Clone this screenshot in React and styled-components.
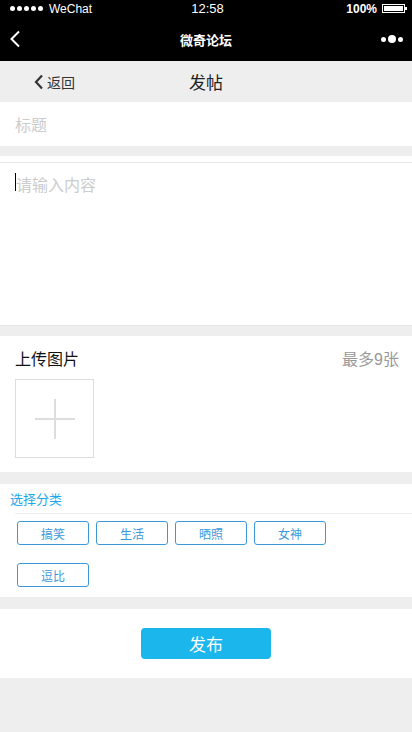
import React from 'react';
import styled, { createGlobalStyle } from 'styled-components';

const GlobalStyle = createGlobalStyle`
  html, body {
    margin: 0;
    padding: 0;
    background: #eeeeee;
    font-family: "Liberation Sans", "Noto Sans CJK SC", sans-serif;
  }
  * { box-sizing: border-box; }
`;

const Page = styled.div`
  width: 412px;
  min-height: 732px;
  background: #eeeeee;
`;

const StatusBar = styled.div`
  height: 17px;
  background: #000;
  color: #fff;
  display: grid;
  grid-template-columns: 1fr auto 1fr;
  align-items: center;
  padding: 0 7px 0 10px;
  font-size: 12px;
`;

const Signal = styled.div`
  display: flex;
  align-items: center;
  gap: 2px;
  span.dot {
    width: 5px;
    height: 5px;
    border-radius: 50%;
    background: #fff;
  }
  span.name {
    margin-left: 4px;
  }
`;

const Clock = styled.div`
  font-size: 13px;
`;

const Battery = styled.div`
  justify-self: end;
  display: flex;
  align-items: center;
  gap: 5px;
  font-weight: bold;
  font-size: 12px;
`;

const BatteryBody = styled.div`
  position: relative;
  width: 23px;
  height: 9px;
  border: 1px solid #fff;
  padding: 1px;
  &::before {
    content: '';
    display: block;
    width: 100%;
    height: 100%;
    background: #fff;
  }
  &::after {
    content: '';
    position: absolute;
    right: -3px;
    top: 2px;
    width: 2px;
    height: 3px;
    background: #fff;
  }
`;

const NavBar = styled.div`
  height: 44px;
  background: #000;
  color: #fff;
  display: flex;
  align-items: center;
  justify-content: space-between;
  padding: 0 9px 0 9px;
  position: relative;
`;

const NavTitle = styled.div`
  position: absolute;
  left: 0;
  right: 0;
  text-align: center;
  font-size: 13px;
  font-weight: bold;
  pointer-events: none;
`;

const MoreDots = styled.div`
  display: flex;
  align-items: center;
  gap: 2px;
`;

const Dot = styled.span`
  display: block;
  width: ${p => p.$size}px;
  height: ${p => p.$size}px;
  border-radius: 50%;
  background: #fff;
`;

const Header = styled.div`
  height: 41px;
  display: grid;
  grid-template-columns: 1fr auto 1fr;
  align-items: center;
  padding: 0 0 0 34px;
  color: #333;
`;

const BackLink = styled.div`
  display: flex;
  align-items: center;
  gap: 3px;
  font-size: 14px;
  color: #333;
`;

const HeaderTitle = styled.div`
  font-size: 17px;
  color: #222;
  margin-left: -34px;
`;

const Section = styled.div`
  background: #fff;
  margin-bottom: ${p => p.$gap || 10}px;
  padding-bottom: ${p => p.$pad || 0}px;
`;

const TitleInput = styled.div`
  height: 44px;
  display: flex;
  align-items: center;
  padding-left: 15px;
  font-size: 16px;
  color: #cccccc;
`;

const ContentBox = styled.div`
  height: 170px;
  padding-top: 6px;
  border-bottom: 1px solid #e5e5e5;
`;

const ContentArea = styled.div`
  border-top: 1px solid #e8e8e8;
  height: 163px;
  padding: 9px 15px 0;
  font-size: 16px;
  color: #cccccc;
  display: flex;
  align-items: flex-start;
`;

const Caret = styled.span`
  display: inline-block;
  width: 1px;
  height: 18px;
  background: #000;
  margin-top: 1px;
`;

const UploadHead = styled.div`
  display: flex;
  justify-content: space-between;
  align-items: center;
  padding: 10px 13px 9px 15px;
  font-size: 16px;
  color: #111;
  span.limit {
    color: #999;
  }
`;

const UploadBox = styled.div`
  width: 79px;
  height: 79px;
  margin-left: 15px;
  border: 1px solid #dddddd;
  display: flex;
  align-items: center;
  justify-content: center;
`;

const CategoryLabel = styled.div`
  padding: 5px 10px 0;
  height: 29px;
  font-size: 13px;
  color: #1ea7e8;
`;

const Divider = styled.div`
  margin-left: 15px;
  border-top: 1px solid #eeeeee;
`;

const Tags = styled.div`
  display: grid;
  grid-template-columns: repeat(4, 72px);
  column-gap: 7px;
  row-gap: 18px;
  padding: 7px 0 10px 17px;
`;

const Tag = styled.div`
  height: 24px;
  border: 1px solid #3d98da;
  border-radius: 3px;
  color: #3d98da;
  font-size: 12px;
  display: flex;
  align-items: center;
  justify-content: center;
`;

const SubmitWrap = styled.div`
  height: 69px;
  display: flex;
  justify-content: center;
  padding-top: 19px;
`;

const SubmitButton = styled.button`
  width: 130px;
  height: 31px;
  border: none;
  border-radius: 4px;
  background: #1ab6ec;
  color: #fff;
  font-size: 17px;
  font-family: inherit;
  cursor: pointer;
`;

const categories = ['搞笑', '生活', '晒照', '女神', '逗比'];

export default function App() {
  return (
    <Page>
      <GlobalStyle />
      <StatusBar>
        <Signal>
          {[0, 1, 2, 3, 4].map(i => <span key={i} className="dot" />)}
          <span className="name">WeChat</span>
        </Signal>
        <Clock>12:58</Clock>
        <Battery>
          100%
          <BatteryBody />
        </Battery>
      </StatusBar>

      <NavBar>
        <svg width="12" height="18" viewBox="0 0 12 18">
          <path d="M10 1.5 L2.5 9 L10 16.5" fill="none" stroke="#fff" strokeWidth="2" />
        </svg>
        <NavTitle>微奇论坛</NavTitle>
        <MoreDots>
          <Dot $size={5} />
          <Dot $size={8} />
          <Dot $size={5} />
        </MoreDots>
      </NavBar>

      <Header>
        <BackLink>
          <svg width="10" height="16" viewBox="0 0 10 16">
            <path d="M8 1.5 L2 8 L8 14.5" fill="none" stroke="#333" strokeWidth="2.2" />
          </svg>
          返回
        </BackLink>
        <HeaderTitle>发帖</HeaderTitle>
        <div />
      </Header>

      <Section>
        <TitleInput>标题</TitleInput>
      </Section>

      <Section>
        <ContentBox>
          <ContentArea>
            <Caret />
            请输入内容
          </ContentArea>
        </ContentBox>
      </Section>

      <Section $gap={12} $pad={14}>
        <UploadHead>
          <span>上传图片</span>
          <span className="limit">最多9张</span>
        </UploadHead>
        <UploadBox>
          <svg width="40" height="40" viewBox="0 0 40 40">
            <path d="M20 0 V40 M0 20 H40" stroke="#dddddd" strokeWidth="2" />
          </svg>
        </UploadBox>
      </Section>

      <Section $gap={12}>
        <CategoryLabel>选择分类</CategoryLabel>
        <Divider />
        <Tags>
          {categories.map(c => <Tag key={c}>{c}</Tag>)}
        </Tags>
      </Section>

      <Section>
        <SubmitWrap>
          <SubmitButton>发布</SubmitButton>
        </SubmitWrap>
      </Section>
    </Page>
  );
}
